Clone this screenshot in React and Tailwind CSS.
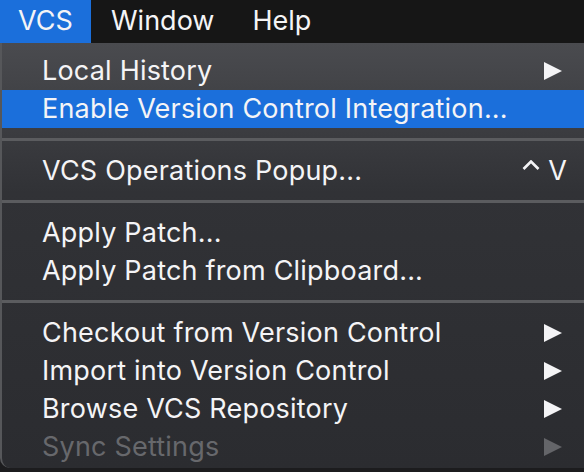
import React from 'react'

function Arrow({ disabled }) {
  return (
    <svg width="18" height="18" viewBox="0 0 18 18" className="shrink-0">
      <polygon points="0,0 18,9 0,18" fill={disabled ? '#646569' : '#f4f4f6'} />
    </svg>
  )
}

function Row({ label, arrow, shortcut, active, disabled }) {
  return (
    <div
      className={`h-[38px] flex items-center pl-[40px] pr-[22px] ${active ? 'bg-[#1b6fdb]' : ''}`}
    >
      <span className={`flex-1 leading-none -mt-[2px] tracking-[0.2px] ${disabled ? 'text-[#67686c]' : 'text-[#f4f4f6]'}`}>{label}</span>
      {arrow && <Arrow disabled={disabled} />}
      {shortcut && (
        <span className="flex items-center gap-[8px] text-[#f4f4f6] leading-none -mt-[2px] -mr-[5px]">
          <svg width="18" height="10" viewBox="0 0 18 10" className="-mt-[10px]">
            <polyline points="1.5,9 9,1.5 16.5,9" fill="none" stroke="#f4f4f6" strokeWidth="2.6" />
          </svg>
          <span>V</span>
        </span>
      )}
    </div>
  )
}

function Separator() {
  return (
    <div className="pt-[10px] pb-[11px]">
      <div className="h-[3px] bg-[#5b5c5f]" />
    </div>
  )
}

export default function App() {
  return (
    <div className="w-[584px] h-[472px] bg-[#1c1c1e] overflow-hidden" style={{ fontFamily: 'Inter, "Liberation Sans", sans-serif' }}>
      {/* menu bar */}
      <div className="h-[43px] bg-[#161616] flex items-center text-[27px] text-[#f4f4f6]">
        <div className="h-full w-[91px] bg-[#1b6fdb] flex items-center pl-[18px]">VCS</div>
        <div className="ml-[20px]">Window</div>
        <div className="ml-[38px]">Help</div>
      </div>

      {/* dropdown */}
      <div className="w-full h-[425px] rounded-bl-[10px] border-l-2 border-[#56575a] bg-gradient-to-b from-[#4a4b4f] via-[#313236] via-35% to-[#2b2c30] pt-[9px] text-[27px]">
        <Row label="Local History" arrow />
        <Row label="Enable Version Control Integration..." active />
        <Separator />
        <Row label="VCS Operations Popup..." shortcut />
        <Separator />
        <Row label="Apply Patch..." />
        <Row label="Apply Patch from Clipboard..." />
        <Separator />
        <Row label="Checkout from Version Control" arrow />
        <Row label="Import into Version Control" arrow />
        <Row label="Browse VCS Repository" arrow />
        <Row label="Sync Settings" arrow disabled />
      </div>
    </div>
  )
}
